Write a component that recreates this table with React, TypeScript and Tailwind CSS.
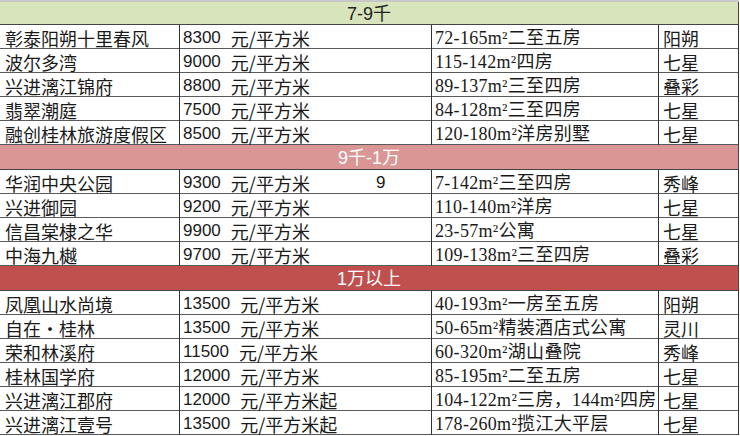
import React from "react";

type Row = {
  name: string;
  price: string;
  suffix?: string;
  extra?: string;
  area: string;
  district: string;
};

type Group = {
  title: string;
  headerClass: string;
  rows: Row[];
};

const groups: Group[] = [
  {
    title: "7-9千",
    headerClass: "bg-[#d8e4bc] text-[#222]",
    rows: [
      { name: "彰泰阳朔十里春风", price: "8300", area: "72-165m²二至五房", district: "阳朔" },
      { name: "波尔多湾", price: "9000", area: "115-142m²四房", district: "七星" },
      { name: "兴进漓江锦府", price: "8800", area: "89-137m²三至四房", district: "叠彩" },
      { name: "翡翠潮庭", price: "7500", area: "84-128m²三至四房", district: "七星" },
      { name: "融创桂林旅游度假区", price: "8500", area: "120-180m²洋房别墅", district: "七星" },
    ],
  },
  {
    title: "9千-1万",
    headerClass: "bg-[#da9694] text-white",
    rows: [
      { name: "华润中央公园", price: "9300", extra: "9", area: "7-142m²三至四房", district: "秀峰" },
      { name: "兴进御园", price: "9200", area: "110-140m²洋房", district: "七星" },
      { name: "信昌棠棣之华", price: "9900", area: "23-57m²公寓", district: "七星" },
      { name: "中海九樾", price: "9700", area: "109-138m²三至四房", district: "叠彩" },
    ],
  },
  {
    title: "1万以上",
    headerClass: "bg-[#c0504d] text-white",
    rows: [
      { name: "凤凰山水尚境", price: "13500", area: "40-193m²一房至五房", district: "阳朔" },
      { name: "自在・桂林", price: "13500", area: "50-65m²精装酒店式公寓", district: "灵川" },
      { name: "荣和林溪府", price: "11500", area: "60-320m²湖山叠院", district: "秀峰" },
      { name: "桂林国学府", price: "12000", area: "85-195m²二至五房", district: "七星" },
      { name: "兴进漓江郡府", price: "12000", suffix: "起", area: "104-122m²三房，144m²四房", district: "七星" },
      { name: "兴进漓江壹号", price: "13500", suffix: "起", area: "178-260m²揽江大平层", district: "七星" },
    ],
  },
];

function DataRow({ row }: { row: Row }) {
  return (
    <div className="grid grid-cols-[180px_252px_227px_80px] h-[24px] border-b border-[#5a5a5a] text-[#1a1a1a] whitespace-nowrap leading-[22px]">
      <div className="flex items-center pt-[2px] pl-[5px] border-r border-[#333] text-[18px] font-['Noto_Sans_CJK_SC',sans-serif]">
        {row.name}
      </div>
      <div className="flex items-center pt-[2px] pl-[3px] border-r border-[#333]">
        <span className="text-[17px] font-['Liberation_Sans',sans-serif]">{row.price}</span>
        <span className="ml-[10px] text-[18px] font-['Noto_Sans_CJK_SC',sans-serif]">
          元/平方米{row.suffix ?? ""}
        </span>
        {row.extra ? (
          <span className="ml-[66px] text-[17px] font-['Liberation_Sans',sans-serif]">{row.extra}</span>
        ) : null}
      </div>
      <div className="flex items-center pt-[2px] pl-[3px] border-r border-[#333] text-[18px] tracking-[0.3px] font-['Liberation_Serif','Noto_Sans_CJK_SC',serif]">
        {row.area}
      </div>
      <div className="flex items-center pt-[2px] pl-[4px] border-r border-[#333] text-[18px] font-['Noto_Sans_CJK_SC',sans-serif]">
        {row.district}
      </div>
    </div>
  );
}

export default function App() {
  return (
    <div className="w-[740px] h-[436px] bg-white overflow-hidden">
      <div className="w-[739px] border-t-2 border-[#c8c8c8]">
        {groups.map((g, gi) => (
          <div key={g.title}>
            <div
              className={`${g.headerClass} ${gi === 0 ? "h-[23px]" : "h-[25px]"} flex items-center justify-center pt-[1px] border-b border-r border-[#444] text-[18px] leading-[22px] font-['Liberation_Sans','Noto_Sans_CJK_SC',sans-serif]`}
            >
              {g.title}
            </div>
            {g.rows.map((r) => (
              <DataRow key={r.name} row={r} />
            ))}
          </div>
        ))}
      </div>
    </div>
  );
}
